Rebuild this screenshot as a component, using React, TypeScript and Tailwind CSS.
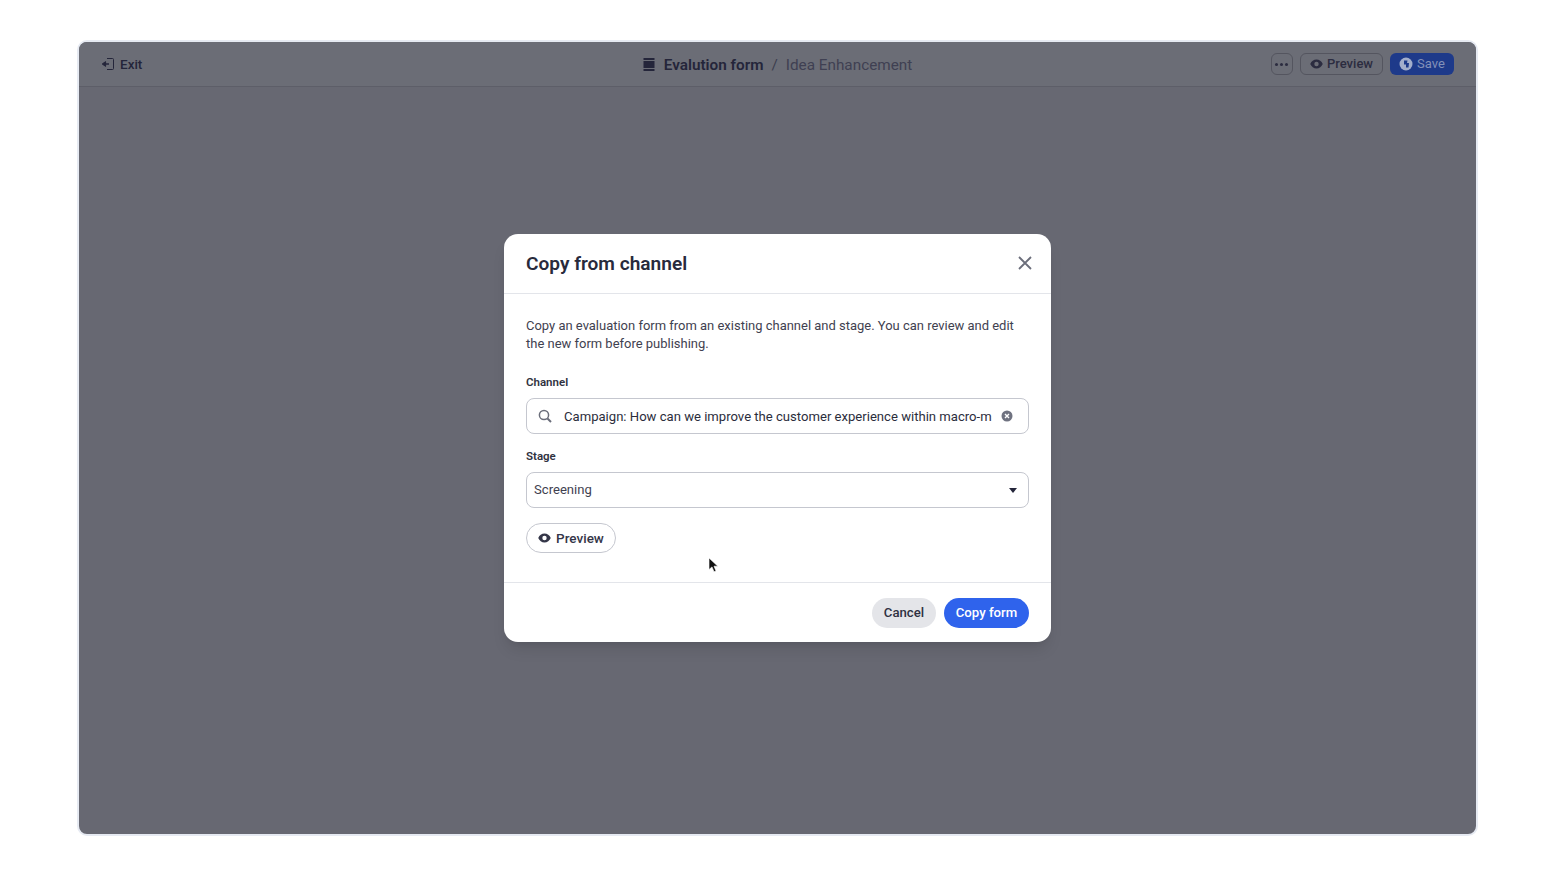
import React from "react";

const font = { fontFamily: 'Roboto, "Noto Sans", sans-serif' };

function Eye({ className }: { className?: string }) {
  return (
    <svg viewBox="0 0 16 12" className={className} fill="currentColor">
      <path fillRule="evenodd" d="M8 0.5C4.6 0.5 1.7 2.6 0.3 6c1.4 3.4 4.3 5.5 7.7 5.5s6.3-2.1 7.7-5.5C14.3 2.6 11.4 0.5 8 0.5zM8 8.7A2.7 2.7 0 1 1 8 3.3a2.7 2.7 0 0 1 0 5.4z" />
    </svg>
  );
}

export default function App() {
  return (
    <div className="w-[1555px] h-[875px] bg-white pt-10 pl-[77px] overflow-hidden" style={font}>
      <div className="relative w-[1401px] h-[796px] border-2 border-[#e6eaf2] rounded-[10px] bg-[#676872] overflow-hidden flex flex-col">
        <header className="h-[45px] shrink-0 bg-[#6b6d76] border-b border-[#5d5e68] flex items-center justify-between pl-[22px] pr-[22px]">
          <div className="flex items-center gap-[5px] text-[13.5px] font-medium text-[#24253a] w-[300px]">
            <svg viewBox="0 0 14 14" className="w-[14px] h-[14px]" fill="none">
              <path d="M6 1.5h5.5a1 1 0 0 1 1 1v9a1 1 0 0 1-1 1H6" stroke="#24253a" strokeWidth="1" />
              <path d="M8 7H4.6V4.6L1.2 7l3.4 2.4V7z" fill="#24253a" stroke="#24253a" strokeWidth="1" strokeLinejoin="round" />
            </svg>
            <span>Exit</span>
          </div>
          <div className="flex items-center text-[15.3px] leading-[20px] pt-[1px]">
            <svg viewBox="0 0 12 13" className="w-3 h-[13px] mr-[9px]" fill="#24253a">
              <rect x="0.5" y="0" width="11" height="2" />
              <rect x="0.5" y="3" width="11" height="7" />
              <rect x="0.5" y="11" width="11" height="2" />
            </svg>
            <span className="font-semibold text-[#24253a]">Evalution form</span>
            <span className="mx-2 text-[#3c3d4e]">/</span>
            <span className="text-[#3f4052]">Idea Enhancement</span>
          </div>
          <div className="flex items-center justify-end w-[300px] text-[13px]">
            <div className="w-[22px] h-[22px] rounded-md border border-[#54555f] flex items-center justify-center gap-[2px] mr-[7px]">
              <span className="w-[3px] h-[3px] rounded-full bg-[#2b2c40]" />
              <span className="w-[3px] h-[3px] rounded-full bg-[#2b2c40]" />
              <span className="w-[3px] h-[3px] rounded-full bg-[#2b2c40]" />
            </div>
            <div className="h-[22px] w-[83px] rounded-md border border-[#54555f] flex items-center justify-center gap-[4px] text-[#2b2c40] font-medium mr-[7px]">
              <Eye className="w-[13px] h-[10px]" />
              <span>Preview</span>
            </div>
            <div className="h-[22px] w-[64px] rounded-md bg-[#1e3a8a] flex items-center justify-center gap-[4px] text-[#8391b8] font-normal">
              <svg viewBox="0 0 14 14" className="w-[14px] h-[14px]">
                <circle cx="7" cy="7" r="6.5" fill="#a3aecb" />
                <path d="M5 3.5h3.5L8 6h2l-.5 4.5H7V7.5H5z" fill="#1e3a8a" />
              </svg>
              <span>Save</span>
            </div>
          </div>
        </header>
        <main className="flex-1" />

        <div className="absolute inset-0 flex items-center justify-center">
          <div className="relative w-[547px] h-[408px] bg-white rounded-[14px] shadow-lg flex flex-col text-[#24253a]">
            <div className="h-[60px] shrink-0 border-b border-[#e3e5ea] flex items-center justify-between pl-[22px] pr-[19px]">
              <h2 className="mt-[2px] text-[19.1px] font-semibold text-[#282a3c]">Copy from channel</h2>
              <svg viewBox="0 0 14 14" className="mb-[2px] w-[14px] h-[14px] text-[#6b6e7b]" fill="none" stroke="currentColor" strokeWidth="1.8">
                <path d="M1 1l12 12M13 1L1 13" />
              </svg>
            </div>
            <div className="flex-1 px-[22px] pt-[23px]">
              <p className="text-[12.97px] leading-[18px] text-[#3f4150]">
                Copy an evaluation form from an existing channel and stage. You can review and edit the new form before publishing.
              </p>
              <label className="block mt-[22px] text-[11.5px] leading-[14px] font-semibold text-[#30323f]">Channel</label>
              <div className="mt-[9px] h-9 rounded-lg border border-[#c5c7cf] flex items-center pl-[11px] pr-[15px] text-[13.1px] text-[#2b2d3c]">
                <svg viewBox="0 0 14 14" className="w-[14px] h-[14px] text-[#6b6e7b] shrink-0" fill="none" stroke="currentColor" strokeWidth="1.5">
                  <circle cx="6" cy="6" r="4.6" />
                  <path d="M9.5 9.5L13 13" strokeWidth="2" />
                </svg>
                <span className="ml-3 pt-[1px] flex-1 whitespace-nowrap">Campaign: How can we improve the customer experience within macro-m</span>
                <svg viewBox="0 0 12 12" className="w-3 h-3 ml-2 shrink-0">
                  <circle cx="6" cy="6" r="5.5" fill="#6f7280" />
                  <path d="M4 4l4 4M8 4l-4 4" stroke="#fff" strokeWidth="1.4" />
                </svg>
              </div>
              <label className="block mt-[15px] text-[11.5px] leading-[14px] font-semibold text-[#30323f]">Stage</label>
              <div className="mt-[9px] h-9 rounded-lg border border-[#c5c7cf] flex items-center justify-between pl-[7px] pr-[11px] text-[13.1px] text-[#3f4150]">
                <span>Screening</span>
                <svg viewBox="0 0 8 5" className="w-2 h-[5px]" fill="#24253a"><path d="M0 0h8L4 5z" /></svg>
              </div>
              <div className="mt-[15px] h-[30px] w-[90px] rounded-full border border-[#c5c7cf] flex items-center justify-center gap-[5px] text-[13.5px] font-medium text-[#343648]">
                <Eye className="w-[13px] h-[10px]" />
                <span>Preview</span>
              </div>
            </div>
            <div className="h-[60px] shrink-0 border-t border-[#e3e5ea] flex items-center justify-end gap-2 px-[22px] text-[13.2px] font-medium">
              <div className="h-[30px] w-[64px] rounded-full bg-[#e4e5e9] text-[#2f3142] flex items-center justify-center">Cancel</div>
              <div className="h-[30px] w-[85px] rounded-full bg-[#2f63ec] text-white flex items-center justify-center">Copy form</div>
            </div>
            <svg viewBox="0 0 10 16" className="absolute left-[204px] top-[323px] w-[10px] h-4">
              <path d="M1 1v11.5l3-2.6 2 4.8 2-.8-2-4.7h3.8z" fill="#111" stroke="#fff" strokeWidth="0.6" />
            </svg>
          </div>
        </div>
      </div>
    </div>
  );
}
